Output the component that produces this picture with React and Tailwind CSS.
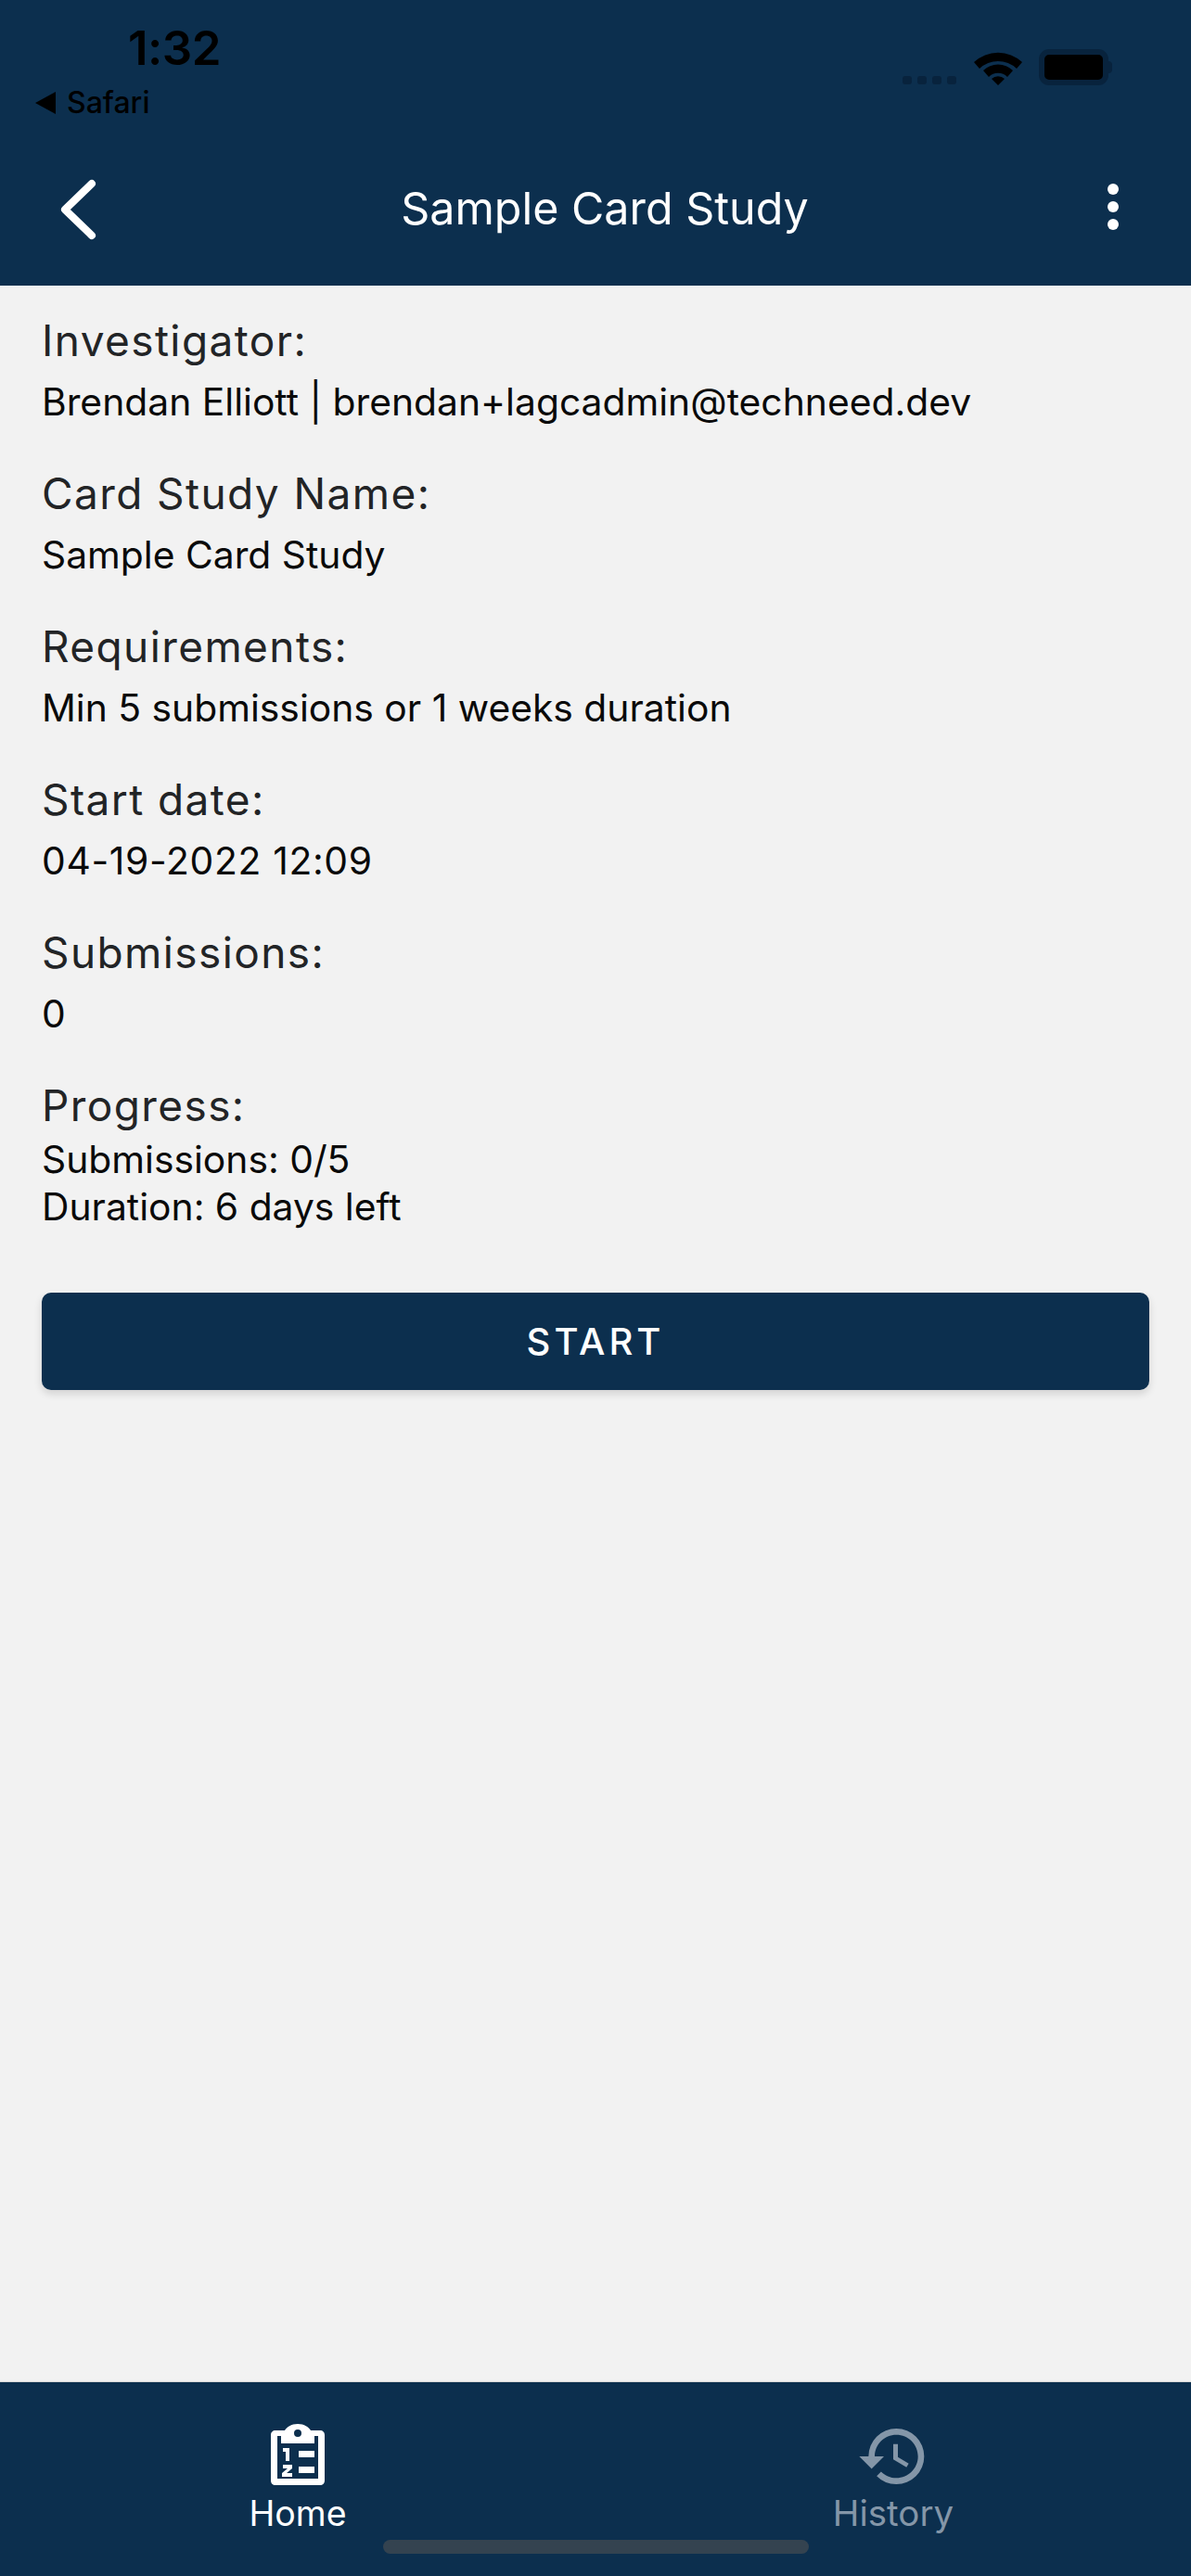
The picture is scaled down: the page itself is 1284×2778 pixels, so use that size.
import React from "react";
import { MdHistory } from "react-icons/md";

const font = { fontFamily: "Inter, 'Noto Sans', sans-serif" };

function Section({ label, children, tight, wide }) {
  return (
    <section className="mb-[44px]">
      <h2 className="text-[46px] leading-[58px] font-normal tracking-[1.4px] text-[#222426]">{label}</h2>
      <div className={(tight ? "mt-[4px]" : "mt-[12px]") + (wide ? " tracking-[0.65px]" : "") + " text-[40.8px] leading-[51px] text-[#0a0a0a]"}>{children}</div>
    </section>
  );
}

function Wifi() {
  return (
    <svg width="52" height="38" viewBox="0 0 52 38" className="mr-[18px]">
      <path d="M0 13 A38 38 0 0 1 52 13 L46 20 A29 29 0 0 0 6 20 Z" fill="#000" />
      <path d="M10 24 A23 23 0 0 1 42 24 L36 31 A14 14 0 0 0 16 31 Z" fill="#000" transform="translate(0 -2)" />
      <path d="M19 31 A10 10 0 0 1 33 31 L26 38 Z" fill="#000" />
    </svg>
  );
}

function Battery() {
  return (
    <div className="flex items-center">
      <div className="w-[75px] h-[39px] rounded-[11px] border-[6px] border-[#08233d] bg-black" />
      <div className="w-[4px] h-[13px] rounded-r-full bg-[#08233d]" />
    </div>
  );
}

function ClipboardIcon() {
  return (
    <svg width="58" height="66" viewBox="0 0 58 66" fill="none">
      <path
        fillRule="evenodd"
        d="M29 0c7 0 12 3.500 14 7h10c3 0 5 2 5 5v49c0 3-2 5-5 5H5c-3 0-5-2-5-5V12c0-3 2-5 5-5h10c2-3.500 7-7 14-7zM7 13v46h44V13h-4v8H11v-8H7zM29 6a4 4 0 1 0 0 8 4 4 0 0 0 0-8z"
        fill="#fff"
      />
      <path d="M13 26h7v14h-4V30h-3zM13 44h10v4l-6 5h6v4H12v-4l6-5h-5zM30 29h17v7H30zM30 46h17v7H30z" fill="#fff" />
    </svg>
  );
}

export default function App() {
  return (
    <div style={font} className="w-[1284px] h-[2778px] flex flex-col bg-[#f2f2f2]">
      <header className="h-[308px] shrink-0 bg-[#0c2f4e] flex flex-col">
        <div className="h-[182px] shrink-0 flex justify-between">
          <div className="pl-[38px] pt-[24px]">
            <div className="pl-[100px] text-[51px] leading-[56px] font-semibold text-black tracking-[-0.5px]">1:32</div>
            <div className="flex items-center mt-[13px]">
              <span className="w-0 h-0 border-y-[12px] border-y-transparent border-r-[22px] border-r-black" />
              <span className="ml-[12px] text-[32px] leading-[36px] font-medium text-black">Safari</span>
            </div>
          </div>
          <div className="flex items-end h-[92px] pr-[85px]">
            <div className="flex gap-[6px] mr-[19px] mb-[1px]">
              {[0, 1, 2, 3].map((i) => (
                <span key={i} className="w-[10px] h-[9px] rounded-[3px] bg-[#08233d]" />
              ))}
            </div>
            <Wifi />
            <Battery />
          </div>
        </div>
        <div className="flex-1 flex items-start relative">
          <svg width="42" height="68" viewBox="0 0 42 68" fill="none" className="ml-[63px] mt-[10px]">
            <path d="M36 6 L7 34 L36 62" stroke="#fff" strokeWidth="8" strokeLinecap="round" strokeLinejoin="round" />
          </svg>
          <h1 className="absolute left-0 right-0 top-[13px] pl-[20px] text-center text-[48.4px] leading-[60px] font-normal text-white">Sample Card Study</h1>
          <div className="ml-auto mr-[78px] mt-[16px] flex flex-col gap-[7px]">
            {[0, 1, 2].map((i) => (
              <span key={i} className="w-[12px] h-[12px] rounded-full bg-white" />
            ))}
          </div>
        </div>
      </header>

      <main className="flex-1 px-[45px] pt-[30px]">
        <Section label="Investigator:">Brendan Elliott | brendan+lagcadmin@techneed.dev</Section>
        <Section label="Card Study Name:">Sample Card Study</Section>
        <Section label="Requirements:">Min 5 submissions or 1 weeks duration</Section>
        <Section label="Start date:" wide>04-19-2022 12:09</Section>
        <Section label="Submissions:">0</Section>
        <Section label="Progress:" tight>
          <div>Submissions: 0/5</div>
          <div>Duration: 6 days left</div>
        </Section>
        <button className="mt-[23px] w-full h-[105px] rounded-[10px] bg-[#0c2f4e] text-white text-[40px] tracking-[4px] font-medium shadow-[0_4px_8px_rgba(0,0,0,0.14)]">
          START
        </button>
      </main>

      <nav className="h-[210px] shrink-0 bg-[#0c2f4e] border-t border-t-[#d8d8d8] grid grid-cols-2 relative">
        <div className="flex flex-col items-center pt-[45px]">
          <ClipboardIcon />
          <span className="mt-[8px] text-[37.5px] leading-[46px] text-white">Home</span>
        </div>
        <div className="flex flex-col items-center pt-[40px]">
          <MdHistory size={80} color="#8496a8" />
          <span className="mt-[-2px] text-[38.5px] leading-[46px] text-[#8496a8]">History</span>
        </div>
        <div className="absolute left-[413px] top-[170px] w-[459px] h-[15px] rounded-full bg-[#344350]" />
      </nav>
    </div>
  );
}
